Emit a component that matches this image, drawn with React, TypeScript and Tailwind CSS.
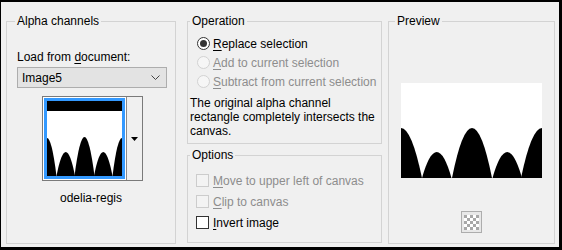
import React from 'react';

const Ul = ({ text }: { text: string }) => (
  <span>
    <span className="underline underline-offset-[2px]">{text[0]}</span>
    {text.slice(1)}
  </span>
);

function Radio({ label, checked, disabled }: { label: string; checked?: boolean; disabled?: boolean }) {
  return (
    <div className="h-[19px] flex items-center pl-[9px] gap-[3px]">
      <div
        className={`w-[13px] h-[13px] rounded-full border flex items-center justify-center ${
          disabled ? 'border-[#d2d2d2] bg-[#f6f6f6]' : 'border-[#333333] bg-white'
        }`}
      >
        {checked && <div className="w-[7px] h-[7px] rounded-full bg-[#333333]" />}
      </div>
      <div className={disabled ? 'text-[#8d8d8d]' : 'text-black'}>
        <Ul text={label} />
      </div>
    </div>
  );
}

function Check({ label, disabled }: { label: string; disabled?: boolean }) {
  return (
    <div className="h-[21px] flex items-center pl-[8px] gap-[4px]">
      <div
        className={`w-[13px] h-[13px] border ${
          disabled ? 'border-[#cccccc] bg-[#f3f3f3]' : 'border-[#333333] bg-white'
        }`}
      />
      <div className={disabled ? 'text-[#8d8d8d]' : 'text-black'}>
        <Ul text={label} />
      </div>
    </div>
  );
}

// parabolic arch from x0 to x1, peak at yt, base at yb
const arch = (x0: number, x1: number, yt: number, yb: number) =>
  `M${x0} ${yb}Q${(x0 + x1) / 2} ${2 * yt - yb} ${x1} ${yb}Z`;

function Thumb() {
  return (
    <svg width="75" height="75" viewBox="0 0 75 75" className="block">
      <rect width="75" height="75" fill="#fff" />
      <rect width="75" height="10" fill="#000" />
      <path d={arch(-9.5, 9.5, 37, 75)} fill="#000" />
      <path d={arch(9.5, 28, 51, 75)} fill="#000" />
      <path d={arch(27.5, 47.5, 36, 75)} fill="#000" />
      <path d={arch(47, 65.5, 51, 75)} fill="#000" />
      <path d={arch(65.5, 84.5, 37, 75)} fill="#000" />
    </svg>
  );
}

function PreviewImage() {
  return (
    <svg width="141" height="95" viewBox="0 0 141 95" className="block">
      <path d={arch(-21, 21, 45, 95)} fill="#000" />
      <path d={arch(21, 50.5, 69, 95)} fill="#000" />
      <path d={arch(51, 91, 45, 95)} fill="#000" />
      <path d={arch(91.5, 121, 69, 95)} fill="#000" />
      <path d={arch(120, 162, 45, 95)} fill="#000" />
    </svg>
  );
}

const cells = Array.from({ length: 25 }, (_, i) => (Math.floor(i / 5) + (i % 5)) % 2 === 0);

export default function App() {
  return (
    <div className="w-[562px] h-[250px] bg-[#f0f0f0] border-black border-t-2 border-l border-r-[3px] border-b-[3px] flex pl-[5px] pt-[12px] font-['Liberation_Sans',Arial,sans-serif] text-[12px] text-black">
      {/* Alpha channels */}
      <fieldset className="w-[170px] h-[230px] border border-[#d3d3d3] m-0 p-0 min-w-0">
        <legend className="ml-[8px] px-[2px] leading-[14px]">Alpha channels</legend>
        <div className="pl-[10px] pt-[22px]">
          <div className="leading-[14px]">
            Load from <span className="underline underline-offset-[2px]">d</span>ocument:
          </div>
          <div className="mt-[3px] w-[150px] h-[21px] border border-[#adadad] bg-[#e3e3e3] flex items-center justify-between pl-[4px] pr-[6px]">
            <span>Image5</span>
            <svg width="9" height="5" viewBox="0 0 9 5">
              <path d="M0.5 0.5L4.5 4.5L8.5 0.5" fill="none" stroke="#444" strokeWidth="1" />
            </svg>
          </div>
          <div className="mt-[8px] ml-[25px] w-[101px] border border-[#7a7a7a] bg-white flex">
            <div className="p-[1px]">
              <div className="border-[3px] border-[#3399ff]">
                <Thumb />
              </div>
            </div>
            <div className="flex-1 bg-[#f0f0f0] border-l border-[#8a8a8a] flex items-center justify-center">
              <svg width="7" height="4" viewBox="0 0 7 4">
                <path d="M0 0H7L3.5 4Z" fill="#000" />
              </svg>
            </div>
          </div>
        </div>
        <div className="mt-[10px] leading-[14px] text-center">odelia-regis</div>
      </fieldset>

      {/* Operation / Options */}
      <div className="ml-[11px] w-[195px] flex flex-col">
        <fieldset className="h-[130px] border border-[#d3d3d3] m-0 p-0 min-w-0">
          <legend className="ml-[2px] px-[2px] leading-[14px]">Operation</legend>
          <div className="pt-[6px]">
            <Radio label="Replace selection" checked />
            <Radio label="Add to current selection" disabled />
            <Radio label="Subtract from current selection" disabled />
            <p className="mt-[5px] pl-[2px] leading-[14px]">
              The original alpha channel rectangle completely intersects the canvas.
            </p>
          </div>
        </fieldset>
        <fieldset className="mt-[4px] h-[95px] border border-[#d3d3d3] m-0 p-0 min-w-0">
          <legend className="ml-[2px] px-[2px] leading-[14px]">Options</legend>
          <div className="pt-[8px]">
            <Check label="Move to upper left of canvas" disabled />
            <Check label="Clip to canvas" disabled />
            <Check label="Invert image" />
          </div>
        </fieldset>
      </div>

      {/* Preview */}
      <fieldset className="ml-[6px] w-[167px] h-[230px] border border-[#d3d3d3] m-0 p-0 min-w-0">
        <legend className="ml-[6px] px-[2px] leading-[14px]">Preview</legend>
        <div className="flex flex-col items-center pt-[55px]">
          <div className="w-[141px] h-[95px] bg-white">
            <PreviewImage />
          </div>
          <div className="mt-[33px] w-[21px] h-[22px] border border-[#adadad] bg-[#e8e8e8] flex items-center justify-center">
            <div className="grid grid-cols-5 w-[15px] h-[15px]">
              {cells.map((d, i) => (
                <div key={i} className={d ? 'bg-[#a8a8a8]' : 'bg-white'} />
              ))}
            </div>
          </div>
        </div>
      </fieldset>
    </div>
  );
}
